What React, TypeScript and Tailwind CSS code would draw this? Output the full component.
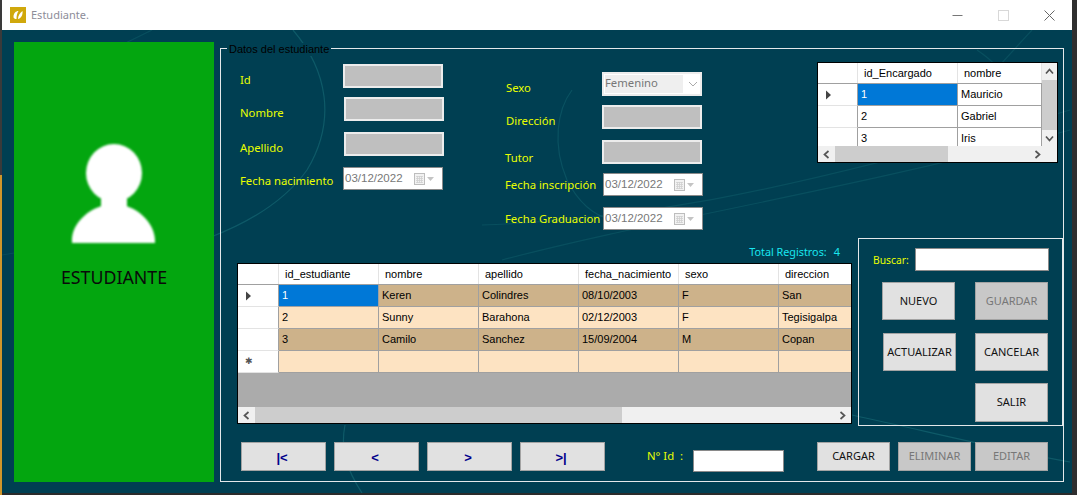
import React from "react";

const UI = "font-['Noto_Sans','Open_Sans',sans-serif]";
const SANS = "font-['Liberation_Sans',Arial,sans-serif]";

function Label({ children, className = "" }: { children: React.ReactNode; className?: string }) {
  return <span className={`${UI} text-[11.3px] leading-[16px] text-[#eaff00] whitespace-nowrap shrink-0 ${className}`}>{children}</span>;
}

function GrayInput({ className = "" }: { className?: string }) {
  return <div className={`h-[24px] w-[100px] border-2 border-[#ececec] bg-[#bfbfbf] shrink-0 ${className}`} />;
}

function DateBox({ className = "" }: { className?: string }) {
  return (
    <div className={`h-[23px] w-[100px] shrink-0 flex items-center justify-between border border-[#8a8a8a] bg-white pl-[1px] pr-[3px] ${className}`}>
      <span className={`${SANS} text-[11.5px] text-[#777]`}>03/12/2022</span>
      <svg width="26" height="14" viewBox="0 0 26 14" className="shrink-0">
        <rect x="1.5" y="1.5" width="10" height="11" fill="#f2f2f2" stroke="#bdbdbd" />
        <path d="M3 4.5h7M3 6.5h7M3 8.5h7M3 10.5h7M4.5 4v7M6.5 4v7M8.5 4v7" stroke="#cfcfcf" strokeWidth="0.8" />
        <path d="M14 5h7l-3.5 4z" fill="#c4c4c4" />
      </svg>
    </div>
  );
}

function Chevron({ dir }: { dir: "l" | "r" | "u" | "d" }) {
  const rot = { l: 180, r: 0, u: -90, d: 90 }[dir];
  return (
    <svg width="9" height="9" viewBox="0 0 9 9" style={{ transform: `rotate(${rot}deg)` }}>
      <path d="M2.5 1 L6.5 4.5 L2.5 8" fill="none" stroke="#555" strokeWidth="1.7" />
    </svg>
  );
}

function Arrow() {
  return (
    <svg width="7" height="10" viewBox="0 0 7 10">
      <path d="M1 0.5 L6 5 L1 9.5z" fill="#444" />
    </svg>
  );
}

type Row = { cells: string[]; bg: string };

function GridRows({
  cols,
  headers,
  rows,
  rowH,
  headH,
  rowHeadW,
  star,
}: {
  cols: number[];
  headers: string[];
  rows: Row[];
  rowH: number;
  headH: number;
  rowHeadW: number;
  star?: boolean;
}) {
  return (
    <div className={`${SANS} text-[11px] leading-none text-black`}>
      <div className="flex bg-white border-b border-[#a0a0a0]" style={{ height: headH }}>
        <div className="border-r border-[#e3e3e3] shrink-0" style={{ width: rowHeadW }} />
        {headers.map((h, i) => (
          <div key={h} className="flex items-center pl-[6px] border-r border-[#e3e3e3] whitespace-nowrap overflow-hidden shrink-0" style={{ width: cols[i] }}>
            {h}
          </div>
        ))}
      </div>
      {rows.map((r, ri) => (
        <div key={ri} className="flex" style={{ height: rowH }}>
          <div className="flex items-center justify-start pl-[7px] bg-white border-r border-b border-[#a0a0a0] border-b-[#e3e3e3] shrink-0" style={{ width: rowHeadW }}>
            {ri === 0 && <Arrow />}
            {star && ri === rows.length - 1 && <span className="text-[#555] text-[9px] leading-none">✱</span>}
          </div>
          {r.cells.map((c, i) => (
            <div
              key={i}
              className={`flex items-center pl-[3px] border-r border-b border-[#a0a0a0] shrink-0 whitespace-nowrap overflow-hidden ${
                ri === 0 && i === 0 ? "text-white" : ""
              }`}
              style={{ width: cols[i], backgroundColor: ri === 0 && i === 0 ? "#0078d7" : r.bg }}
            >
              {c}
            </div>
          ))}
        </div>
      ))}
    </div>
  );
}

function Btn({ children, off, className = "" }: { children: string; off?: boolean; className?: string }) {
  return (
    <div
      className={`${UI} w-[73px] shrink-0 flex items-center justify-center text-[11px] border border-[#a3a3a3] ${
        off ? "bg-[#c8c8c8] text-[#777]" : "bg-[#e1e1e1] text-[#111]"
      } ${className}`}
    >
      {children}
    </div>
  );
}

function NavBtn({ children }: { children: string }) {
  return (
    <div className={`${SANS} w-[85px] h-[29px] shrink-0 flex items-center justify-center border border-[#a3a3a3] bg-[#e1e1e1] pr-[3px] pt-[3px] text-[13px] font-bold text-[#00008b]`}>
      {children}
    </div>
  );
}

export default function App() {
  const tan = "#cdb28a";
  const cream = "#fde3c2";
  return (
    <div className="w-[1077px] h-[495px] overflow-hidden flex bg-[#2b2b2b]">
      <div className="w-[2px] shrink-0 flex flex-col">
        <div className="h-[175px] bg-[#3a3a3a]" />
        <div className="flex-1 bg-[#d0962a]" />
      </div>
      <div className="w-[1070px] h-[493px] flex flex-col shrink-0">
        <div className="h-[30px] bg-white flex items-center shrink-0">
          <div className="ml-[8px] w-[16px] h-[16px] bg-[#d0a80c] flex items-center justify-center">
            <svg width="12" height="12" viewBox="0 0 12 12">
              <path d="M1.5 8 C1.5 4 4 2 6.5 2 C5 4 4.5 7 4.5 10 C3 10 1.5 9.5 1.5 8z" fill="#fff" />
              <path d="M6 10 C6 7 7.5 4 10.5 2 C11 6 9 9.5 6 10z" fill="#fff" />
            </svg>
          </div>
          <span className={`${UI} ml-[5px] text-[11px] text-[#8d8d99]`}>Estudiante.</span>
          <div className="ml-auto flex items-center">
            <svg width="11" height="11" viewBox="0 0 11 11" className="mr-[35px]"><path d="M0.5 5.5h10" stroke="#777" /></svg>
            <svg width="11" height="11" viewBox="0 0 11 11" className="mr-[35px]"><rect x="0.5" y="0.5" width="10" height="10" fill="none" stroke="#d8d8d8" /></svg>
            <svg width="11" height="11" viewBox="0 0 11 11" className="mr-[17px]"><path d="M0.5 0.5l10 10M10.5 0.5l-10 10" stroke="#666" /></svg>
          </div>
        </div>

        <div className="relative flex-1 bg-[#003f52] pl-[12px] pt-[12px] flex overflow-hidden">
          <svg className="absolute left-0 top-0 pointer-events-none" width="1070" height="463" viewBox="0 0 1070 463" fill="none" stroke="#0e5a68" strokeWidth="1.2">
            <path d="M291 0 C325 40 335 90 305 140 C280 175 240 195 209 207" />
            <path d="M150 0 C120 15 90 30 60 38" opacity="0.6" />
            <path d="M343 395 C338 420 345 440 360 463" />
            <path d="M570 60 C555 80 550 115 565 150 C575 170 590 185 610 190" opacity="0.7" />
            <path d="M480 195 C620 190 760 170 1068 80" opacity="0.6" />
            <path d="M500 230 C650 190 850 160 1068 100" opacity="0.6" />
            <path d="M1010 60 C1000 40 990 30 975 20" opacity="0.6" />
            <path d="M975 60 L1030 0" opacity="0.6" />
            <path d="M850 385 C920 400 1000 420 1068 432" />
            <path d="M0 225 C60 215 120 205 210 195" opacity="0.5" />
          </svg>

          <div className="relative w-[200px] h-[440px] shrink-0 bg-[#03a60f] flex flex-col items-center">
            <svg width="100" height="110" viewBox="0 0 100 110" className="mt-[100px] ml-[-2px]">
              <defs>
                <filter id="soft"><feGaussianBlur stdDeviation="1" /></filter>
              </defs>
              <g fill="#fff" filter="url(#soft)">
                <ellipse cx="51" cy="31" rx="28" ry="29" />
                <rect x="38" y="50" width="26" height="20" />
                <path d="M9 101 C7 80 30 62 51 62 C72 62 93 80 92 101 L50 101z" />
              </g>
            </svg>
            <span className={`${UI} mt-[13px] text-[17.8px] leading-[24px] text-[#0a0a0a]`}>ESTUDIANTE</span>
          </div>

          <fieldset className="relative ml-[6px] mt-[6px] w-[844px] h-[434px] shrink-0 border border-[#e4e8ea] flex flex-col">
            <span className={`${SANS} absolute left-[6px] top-[-6px] bg-[#003f52] px-[2px] text-[11px] leading-[13px] text-black`}>Datos del estudiante</span>

            <div className="h-[189px] flex shrink-0">
              <div className="ml-[19px] mt-[15px] w-[205px] flex flex-col shrink-0">
                <div className="flex items-center h-[24px]">
                  <Label className="w-[103px] mt-[8px]">Id</Label>
                  <GrayInput />
                </div>
                <div className="flex items-center h-[24px] mt-[9px]">
                  <Label className="w-[104px] mt-[8px]">Nombre</Label>
                  <GrayInput />
                </div>
                <div className="flex items-center h-[24px] mt-[11px]">
                  <Label className="w-[104px] mt-[8px]">Apellido</Label>
                  <GrayInput />
                </div>
                <div className="flex items-center h-[23px] mt-[11px]">
                  <Label className="w-[103px] mt-[4px]">Fecha nacimiento</Label>
                  <DateBox />
                </div>
              </div>

              <div className="ml-[60px] mt-[23px] w-[198px] flex flex-col shrink-0">
                <div className="flex items-center h-[24px]">
                  <Label className="w-[97px] mt-[8px] pl-[1px]">Sexo</Label>
                  <div className="h-[24px] w-[100px] shrink-0 flex items-center border-2 border-[#ececec] bg-white">
                    <span className={`${UI} h-[18px] w-[78px] ml-[1px] bg-[#efefef] text-[11.3px] leading-[16px] text-[#777]`}>Femenino</span>
                    <svg width="10" height="6" viewBox="0 0 10 6" className="ml-[5px]"><path d="M1 1l4 4 4-4" fill="none" stroke="#aaa" /></svg>
                  </div>
                </div>
                <div className="flex items-center h-[24px] mt-[9px]">
                  <Label className="w-[97px] mt-[8px] pl-[1px]">Dirección</Label>
                  <GrayInput />
                </div>
                <div className="flex items-center h-[24px] mt-[11px]">
                  <Label className="w-[97px] mt-[11px]">Tutor</Label>
                  <GrayInput />
                </div>
                <div className="flex items-center h-[23px] mt-[9px]">
                  <Label className="w-[98px] mt-[1px]">Fecha inscripción</Label>
                  <DateBox />
                </div>
                <div className="flex items-center h-[23px] mt-[11px]">
                  <Label className="w-[98px]">Fecha Graduacion</Label>
                  <DateBox />
                </div>
              </div>

              <div className="ml-[114px] mt-[13px] w-[241px] h-[101px] shrink-0 border border-black bg-[#f0f0f0] flex flex-col overflow-hidden">
                <div className="flex h-[83px] shrink-0">
                  <div className="w-[224px] h-[83px] overflow-hidden bg-white shrink-0">
                    <GridRows
                      cols={[100, 84]}
                      headers={["id_Encargado", "nombre"]}
                      rows={[
                        { cells: ["1", "Mauricio"], bg: "#ffffff" },
                        { cells: ["2", "Gabriel"], bg: "#ffffff" },
                        { cells: ["3", "Iris"], bg: "#ffffff" },
                      ]}
                      rowH={22}
                      headH={21}
                      rowHeadW={40}
                    />
                  </div>
                  <div className="flex-1 flex flex-col">
                    <div className="h-[17px] flex items-center justify-center"><Chevron dir="u" /></div>
                    <div className="h-[50px] bg-[#cdcdcd]" />
                    <div className="flex-1 flex items-center justify-center"><Chevron dir="d" /></div>
                  </div>
                </div>
                <div className="flex-1 flex items-center">
                  <div className="w-[17px] flex justify-center shrink-0"><Chevron dir="l" /></div>
                  <div className="w-[113px] h-full bg-[#cdcdcd]" />
                  <div className="ml-auto w-[40px] flex justify-center"><Chevron dir="r" /></div>
                </div>
              </div>
            </div>

            <div className="h-[188px] flex shrink-0">
              <div className="ml-[16px] w-[615px] shrink-0 flex flex-col">
                <div className="h-[25px] flex items-end pb-[3px] justify-end pr-[14px] shrink-0">
                  <span className={`${UI} text-[10.8px] leading-[16px] text-[#19e6f0]`}>Total Registros:</span>
                  <span className={`${UI} ml-[7px] mr-[-2px] text-[11px] leading-[16px] text-[#19e6f0]`}>4</span>
                </div>
                <div className="h-[161px] border border-black bg-[#ababab] flex flex-col overflow-hidden">
                  <div className="h-[143px] shrink-0 overflow-hidden">
                    <GridRows
                      cols={[100, 100, 100, 100, 100, 80]}
                      headers={["id_estudiante", "nombre", "apellido", "fecha_nacimiento", "sexo", "direccion"]}
                      rows={[
                        { cells: ["1", "Keren", "Colindres", "08/10/2003", "F", "San"], bg: tan },
                        { cells: ["2", "Sunny", "Barahona", "02/12/2003", "F", "Tegisigalpa"], bg: cream },
                        { cells: ["3", "Camilo", "Sanchez", "15/09/2004", "M", "Copan"], bg: tan },
                        { cells: ["", "", "", "", "", ""], bg: cream },
                      ]}
                      rowH={22}
                      headH={21}
                      rowHeadW={41}
                      star
                    />
                  </div>
                  <div className="flex-1 flex items-center bg-[#f0f0f0]">
                    <div className="w-[17px] flex justify-center shrink-0"><Chevron dir="l" /></div>
                    <div className="w-[367px] h-full bg-[#cdcdcd]" />
                    <div className="ml-auto w-[17px] flex justify-center"><Chevron dir="r" /></div>
                  </div>
                </div>
              </div>

              <div className="ml-[6px] w-[205px] h-[188px] shrink-0 border border-[#e4e8ea] flex flex-col">
                <div className="flex items-center mt-[9px] pl-[14px] h-[23px] shrink-0">
                  <span className={`${UI} w-[42px] shrink-0 text-[10.3px] leading-[16px] text-[#eaff00]`}>Buscar:</span>
                  <div className="w-[134px] h-[23px] bg-white border border-[#8a8a8a]" />
                </div>
                <div className="flex h-[38px] mt-[11px] ml-[23px] shrink-0">
                  <Btn>NUEVO</Btn>
                  <Btn off className="ml-[20px]">GUARDAR</Btn>
                </div>
                <div className="flex h-[38px] mt-[13px] ml-[24px] shrink-0">
                  <Btn>ACTUALIZAR</Btn>
                  <Btn className="ml-[19px]">CANCELAR</Btn>
                </div>
                <div className="flex h-[39px] mt-[12px] ml-[116px] shrink-0">
                  <Btn>SALIR</Btn>
                </div>
              </div>
            </div>

            <div className="flex mt-[16px] ml-[20px] shrink-0">
              <div className="flex gap-[8px]">
                <NavBtn>|&lt;</NavBtn>
                <NavBtn>&lt;</NavBtn>
                <NavBtn>&gt;</NavBtn>
                <NavBtn>&gt;|</NavBtn>
              </div>
              <Label className="ml-[42px] w-[46px] mt-[6px]">N° Id&nbsp;&nbsp;:</Label>
              <div className="mt-[8px] w-[91px] h-[22px] bg-white border border-[#8a8a8a] shrink-0" />
              <Btn className="ml-[33px] h-[29px]">CARGAR</Btn>
              <Btn off className="ml-[8px] h-[29px]">ELIMINAR</Btn>
              <Btn off className="ml-[4px] h-[29px]">EDITAR</Btn>
            </div>
          </fieldset>
        </div>
      </div>
      <div className="w-[5px] shrink-0 bg-[#2f2f2f]" />
    </div>
  );
}
